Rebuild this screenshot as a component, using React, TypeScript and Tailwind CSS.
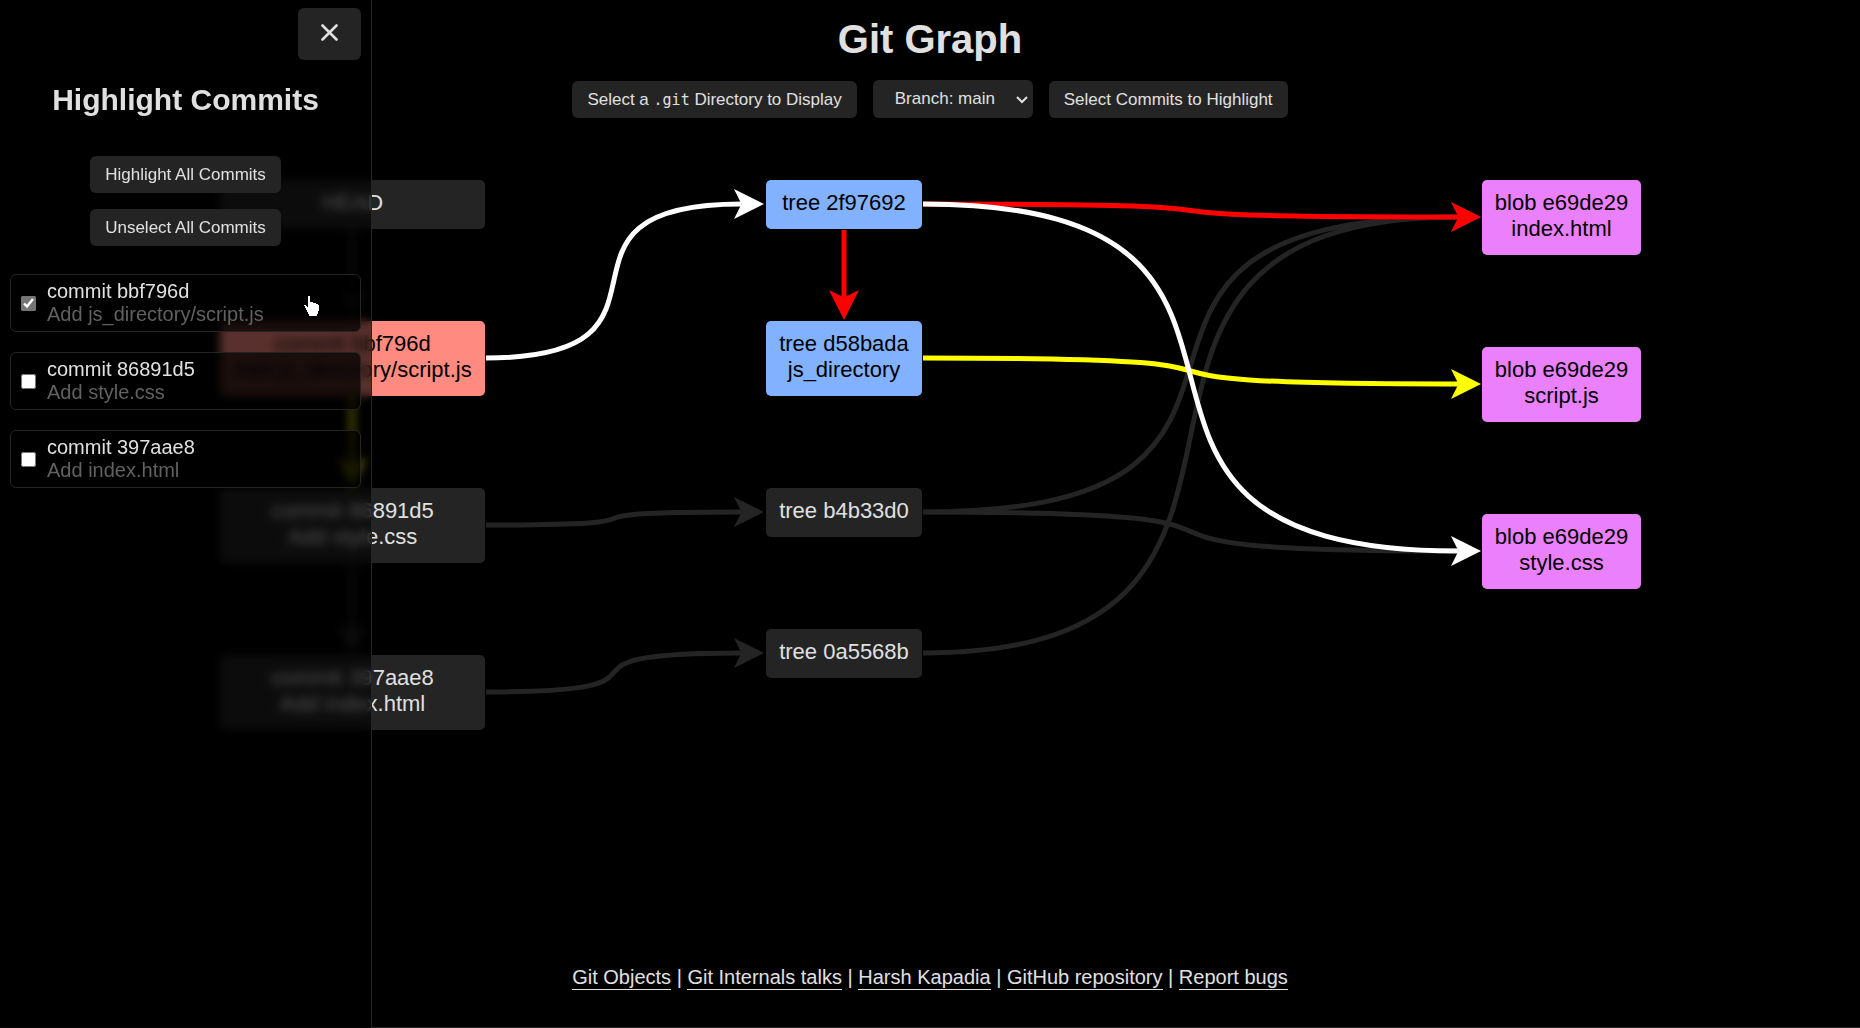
import { useState } from "react";

type Tone = "muted" | "commit" | "tree" | "blob";

type GraphNode = {
  id: string;
  lines: string[];
  place: string;
  tone: Tone;
};

const toneClasses: Record<Tone, string> = {
  muted: "bg-[#242424] text-[#e0e0e0]",
  commit: "bg-[#ff8a80] text-black",
  tree: "bg-[#82b1ff] text-black",
  blob: "bg-[#ea80fc] text-black",
};

const nodes: GraphNode[] = [
  { id: "head", lines: ["HEAD"], place: "left-0 top-0 w-[265px]", tone: "muted" },
  { id: "c1", lines: ["commit bbf796d", "Add js_directory/script.js"], place: "left-0 top-[141px] w-[265px]", tone: "commit" },
  { id: "c2", lines: ["commit 86891d5", "Add style.css"], place: "left-0 top-[308px] w-[265px]", tone: "muted" },
  { id: "c3", lines: ["commit 397aae8", "Add index.html"], place: "left-0 top-[475px] w-[265px]", tone: "muted" },
  { id: "t1", lines: ["tree 2f97692"], place: "left-[546px] top-0 w-[156px]", tone: "tree" },
  { id: "t2", lines: ["tree d58bada", "js_directory"], place: "left-[546px] top-[141px] w-[156px]", tone: "tree" },
  { id: "t3", lines: ["tree b4b33d0"], place: "left-[546px] top-[308px] w-[156px]", tone: "muted" },
  { id: "t4", lines: ["tree 0a5568b"], place: "left-[546px] top-[449px] w-[156px]", tone: "muted" },
  { id: "b1", lines: ["blob e69de29", "index.html"], place: "left-[1262px] top-0 w-[159px]", tone: "blob" },
  { id: "b2", lines: ["blob e69de29", "script.js"], place: "left-[1262px] top-[167px] w-[159px]", tone: "blob" },
  { id: "b3", lines: ["blob e69de29", "style.css"], place: "left-[1262px] top-[334px] w-[159px]", tone: "blob" },
];

type Edge = { from: [number, number]; to: [number, number]; color: string };

const DIM = "#242424";

// Painted in order, so the highlighted edges lie over the dim ones.
const edges: Edge[] = [
  { from: [132, 50], to: [132, 140], color: DIM },
  { from: [132, 384], to: [132, 474], color: DIM },
  { from: [266, 345], to: [544, 332], color: DIM },
  { from: [266, 512], to: [544, 473], color: DIM },
  { from: [703, 332], to: [1261, 37], color: DIM },
  { from: [703, 332], to: [1261, 371], color: DIM },
  { from: [703, 473], to: [1261, 37], color: DIM },
  { from: [132, 217], to: [132, 307], color: "#ffff00" },
  { from: [703, 24], to: [1261, 37], color: "#ff0000" },
  { from: [624, 50], to: [624, 140], color: "#ff0000" },
  { from: [703, 178], to: [1261, 204], color: "#ffff00" },
  { from: [266, 178], to: [544, 24], color: "#ffffff" },
  { from: [703, 24], to: [1261, 371], color: "#ffffff" },
];

const HEAD = 30;
const CURVENESS = 0.8;

function EdgeLine({ from: [x1, y1], to: [x2, y2], color }: Edge) {
  const vertical = x1 === x2;
  const back = HEAD * 0.75;
  const reach = (x2 - x1) * CURVENESS;
  const line = vertical
    ? `M${x1} ${y1}L${x2} ${y2 - back}`
    : `M${x1} ${y1}C${x1 + reach} ${y1} ${x2 - back - reach} ${y2} ${x2 - back} ${y2}`;
  return (
    <g>
      <path d={line} fill="none" stroke={color} strokeWidth="5" />
      <path
        d="M-30 -15L0 0L-30 15L-22.5 0Z"
        fill={color}
        transform={`translate(${x2} ${y2}) rotate(${vertical ? 90 : 0})`}
      />
    </g>
  );
}

const commits = [
  { hash: "bbf796d", message: "Add js_directory/script.js" },
  { hash: "86891d5", message: "Add style.css" },
  { hash: "397aae8", message: "Add index.html" },
];

const links = ["Git Objects", "Git Internals talks", "Harsh Kapadia", "GitHub repository", "Report bugs"];

const buttonClasses = "cursor-pointer rounded-md bg-[#242424] px-[15px] py-2 text-[17px] leading-[21px] text-[#e0e0e0]";

function Sidebar() {
  const [selected, setSelected] = useState<string[]>(["bbf796d"]);
  const toggle = (hash: string) =>
    setSelected((now) => (now.includes(hash) ? now.filter((h) => h !== hash) : [...now, hash]));

  return (
    <aside className="fixed inset-y-0 left-0 flex w-1/5 flex-col border-r border-[#242424] bg-black/65 px-2.5 pt-2 backdrop-blur-[5px]">
      <button type="button" aria-label="Close" className="flex h-[52px] w-[63px] cursor-pointer justify-center self-end rounded-md bg-[#242424] pt-4">
        <svg viewBox="0 0 17 17" className="size-[17px]" fill="none" stroke="#e0e0e0" strokeWidth="2.6" strokeLinecap="round">
          <path d="M1.5 1.5L15.5 15.5M15.5 1.5L1.5 15.5" />
        </svg>
      </button>
      <h2 className="mt-[22px] text-center text-[30px] leading-[35px] font-bold">Highlight Commits</h2>
      <div className="mt-[39px] flex flex-col items-center gap-4">
        <button type="button" className={buttonClasses} onClick={() => setSelected(commits.map((c) => c.hash))}>
          Highlight All Commits
        </button>
        <button type="button" className={buttonClasses} onClick={() => setSelected([])}>
          Unselect All Commits
        </button>
      </div>
      <ul className="mt-7 flex flex-col gap-5">
        {commits.map(({ hash, message }) => (
          <li key={hash}>
            <label className="flex cursor-pointer items-center gap-[11px] rounded-md border border-[#242424] bg-black/70 py-[5px] pl-2.5 text-xl leading-[23px]">
              <input
                type="checkbox"
                className="size-[15px] accent-[#757575]"
                checked={selected.includes(hash)}
                onChange={() => toggle(hash)}
              />
              <span>
                commit {hash}
                <span className="block text-[#616161]">{message}</span>
              </span>
            </label>
          </li>
        ))}
      </ul>
      <svg viewBox="0 0 15 20" className="absolute top-[296px] left-[304px] h-5 w-[15px]" fill="#fff">
        <path d="M4 0h2v6h3v1h3v1h2v1h1v6h-1v3h-1v2H5v-2H4v-2H3v-2H2v-2H1v-2H0V9h2v1h1v1h1z" />
      </svg>
    </aside>
  );
}

export default function App() {
  return (
    <div className="flex min-h-screen flex-col overflow-x-hidden border-b border-[#242424] bg-black font-['Liberation_Sans',Arial,sans-serif] text-[#e0e0e0]">
      <header className="flex flex-col items-center pt-4">
        <h1 className="text-[40px] leading-[46px] font-bold">Git Graph</h1>
        <div className="mt-[18px] flex items-end gap-4">
          <button type="button" className={buttonClasses}>
            Select a <code className="font-['DejaVu_Sans_Mono',monospace] text-[15px] leading-none">.git</code> Directory to Display
          </button>
          <div className="relative">
            <select
              aria-label="Branch"
              className="block h-[38px] w-40 cursor-pointer appearance-none rounded-md bg-[#242424] pl-[22px] text-[17px] text-[#e0e0e0]"
            >
              <option>Branch: main</option>
            </select>
            <svg
              viewBox="0 0 12 8"
              className="pointer-events-none absolute top-4 right-[5px] h-2 w-3"
              fill="none"
              stroke="#e0e0e0"
              strokeWidth="2"
            >
              <path d="M1 1L6 6L11 1" />
            </svg>
          </div>
          <button type="button" className={buttonClasses}>
            Select Commits to Highlight
          </button>
        </div>
      </header>

      <main className="relative mx-auto mt-[62px] h-[550px] w-[1420px]">
        <svg className="absolute inset-0 size-full overflow-visible" aria-hidden="true">
          {edges.map((edge, i) => (
            <EdgeLine key={i} {...edge} />
          ))}
        </svg>
        {nodes.map(({ id, lines, place, tone }) => (
          <div key={id} className={`absolute rounded-[5px] pt-2.5 pb-[13px] text-center text-[22px] leading-[26px] whitespace-nowrap ${place} ${toneClasses[tone]}`}>
            {lines.map((line) => (
              <div key={line}>{line}</div>
            ))}
          </div>
        ))}
      </main>

      <footer className="mt-auto pb-[37px] text-center text-xl leading-[25px]">
        {links.map((link, i) => (
          <span key={link}>
            {i > 0 && " | "}
            <a href="#" className="border-b border-[#e0e0e0] pb-px">
              {link}
            </a>
          </span>
        ))}
      </footer>

      <Sidebar />
    </div>
  );
}
